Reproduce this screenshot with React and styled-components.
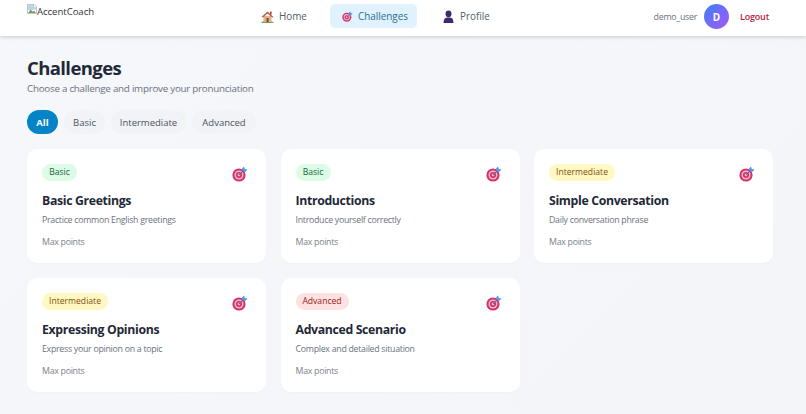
import React from 'react';
import styled, { createGlobalStyle } from 'styled-components';

const Global = createGlobalStyle`
  html, body { margin: 0; padding: 0; }
  body { font-family: "Open Sans", "Noto Sans", sans-serif; background: #f4f6f9; }
  * { box-sizing: border-box; }
`;

const Page = styled.div`
  width: 806px;
  height: 414px;
  overflow: hidden;
  background: linear-gradient(135deg, #f5f7fa 0%, #f3f5f8 100%);
`;

const Navbar = styled.header`
  height: 36px;
  background: #fff;
  box-shadow: 0 1px 4px rgba(0, 0, 0, 0.18);
  display: grid;
  grid-template-columns: 220px 1fr auto;
  padding: 0 37px 0 27px;
  position: relative;
`;

const Logo = styled.div`
  display: flex;
  align-items: flex-start;
  padding-top: 4px;
  font-size: 9.6px;
  letter-spacing: -0.05px;
  line-height: 16px;
  color: #333;
`;

const BrokenImg = styled.svg`
  width: 10px;
  height: 10px;
  flex: none;
`;

const Nav = styled.nav`
  display: flex;
  align-items: flex-start;
  padding-top: 4px;
`;

const NavLink = styled.a`
  height: 24px;
  flex: none;
  display: flex;
  align-items: center;
  gap: 5px;
  padding: 0 12px;
  margin-left: ${p => p.$ml || 0}px;
  width: ${p => p.$w}px;
  border-radius: 5px;
  font-size: 9.9px;
  font-weight: 500;
  color: ${p => (p.$active ? '#2b6f93' : '#555c66')};
  background: ${p => (p.$active ? '#e0f2fe' : 'transparent')};
  svg { flex: none; }
`;

const UserArea = styled.div`
  display: flex;
  align-items: flex-start;
  padding-top: 4px;
  height: 36px;
`;

const UserName = styled.span`
  font-size: 8.8px;
  letter-spacing: -0.25px;
  line-height: 26px;
  color: #6b7280;
  margin-right: 7px;
`;

const Avatar = styled.div`
  width: 25px;
  height: 25px;
  border-radius: 50%;
  background: linear-gradient(135deg, #3b82f6, #a855f7);
  color: #fff;
  display: flex;
  align-items: center;
  justify-content: center;
  font-size: 10px;
  font-weight: 700;
  margin-right: 11px;
`;

const Logout = styled.span`
  font-size: 9px;
  letter-spacing: -0.2px;
  font-weight: 600;
  line-height: 26px;
  color: #b91c3c;
`;

const Main = styled.main`
  padding: 19px 33px 0 27px;
`;

const Title = styled.h1`
  margin: 0;
  font-size: 18.5px;
  letter-spacing: -0.6px;
  line-height: 26px;
  font-weight: 700;
  color: #1f2937;
`;

const Subtitle = styled.p`
  margin: 0;
  font-size: 9.8px;
  letter-spacing: -0.25px;
  line-height: 15px;
  color: #6b7280;
`;

const Filters = styled.div`
  display: flex;
  gap: 6px;
  margin-top: 14px;
`;

const FilterBtn = styled.button`
  height: 24px;
  width: ${p => p.$w}px;
  padding: 0;
  border: 0;
  border-radius: 12px;
  font-family: inherit;
  font-size: 9.5px;
  background: ${p => (p.$active ? '#0284c7' : '#f1f3f6')};
  color: ${p => (p.$active ? '#fff' : '#4b5563')};
  font-weight: ${p => (p.$active ? 700 : 500)};
`;

const Grid = styled.section`
  display: grid;
  grid-template-columns: repeat(3, 239px);
  column-gap: 14.5px;
  row-gap: 15px;
  margin-top: 15px;
`;

const Card = styled.article`
  height: 114px;
  background: #fff;
  border-radius: 10px;
  padding: 15px 15px 0;
  box-shadow: 0 1px 3px rgba(0, 0, 0, 0.02);
`;

const CardHead = styled.div`
  display: flex;
  justify-content: space-between;
  align-items: flex-start;
`;

const colors = {
  Basic: ['#dcfce7', '#166534', 35],
  Intermediate: ['#fef9c3', '#854d0e', 66],
  Advanced: ['#fee2e2', '#991b1b', 53],
};

const Badge = styled.span`
  height: 17px;
  line-height: 17px;
  width: ${p => colors[p.$level][2]}px;
  text-align: center;
  border-radius: 9px;
  font-size: 8.6px;
  font-weight: 500;
  background: ${p => colors[p.$level][0]};
  color: ${p => colors[p.$level][1]};
`;

const IconSlot = styled.div`
  margin: 2px 3px 0 0;
  display: flex;
`;

const CardTitle = styled.h3`
  margin: 9px 0 0;
  font-size: 12.3px;
  letter-spacing: -0.35px;
  line-height: 19px;
  font-weight: 700;
  color: #1f2937;
`;

const CardDesc = styled.p`
  margin: 4px 0 0;
  font-size: 8.8px;
  letter-spacing: -0.28px;
  line-height: 13px;
  color: #6b7280;
`;

const CardPoints = styled.p`
  margin: 9px 0 0;
  font-size: 8.8px;
  letter-spacing: -0.28px;
  line-height: 13px;
  color: #7b828c;
`;

const Target = ({ size = 16 }) => (
  <svg width={size} height={size} viewBox="0 0 16 16">
    <circle cx="7" cy="9" r="6.6" fill="#d6336c" />
    <circle cx="7" cy="9" r="4.5" fill="#f4b6cc" />
    <circle cx="7" cy="9" r="3" fill="#c9305f" />
    <circle cx="7" cy="9" r="1.4" fill="#f4b6cc" />
    <path d="M7 9 L12 4" stroke="#3f6fa8" strokeWidth="1" />
    <path d="M10 2.5 L12 0.5 L12.8 3 L15.5 3.5 L13.5 5.8 L10.8 5 Z" fill="#4a9be8" />
  </svg>
);

const House = () => (
  <svg width="13" height="13" viewBox="0 0 13 13">
    <path d="M0.5 12 Q6 9.5 12.5 12 L12.5 13 L0.5 13 Z" fill="#6fa35a" />
    <rect x="2.5" y="6" width="8" height="6" fill="#d9b48f" />
    <path d="M0.5 7 L6.5 1.5 L12.5 7 L11 7.6 L6.5 3.6 L2 7.6 Z" fill="#c2553d" />
    <rect x="9" y="1.5" width="1.6" height="3" fill="#a5482f" />
    <rect x="5.5" y="8" width="2.2" height="4" fill="#8a4b32" />
  </svg>
);

const Person = () => (
  <svg width="13" height="13" viewBox="0 0 13 13">
    <ellipse cx="6.5" cy="3.8" rx="3" ry="3.4" fill="#3f2a6d" />
    <path d="M1.5 13 Q1.5 8 5 7.6 L8 7.6 Q11.5 8 11.5 13 Z" fill="#3f2a6d" />
  </svg>
);

const Broken = () => (
  <BrokenImg viewBox="0 0 11 11">
    <path d="M0.5 0.5 H8 L10.5 3 V10.5 H0.5 Z" fill="#fff" stroke="#a8a8a8" strokeWidth="0.8" />
    <path d="M1.2 1.2 H7.8 V3.2 H9.8 V6 L1.2 7 Z" fill="#bcd3f0" />
    <path d="M1.2 9.8 L4 6 L6.5 8.5 L8 7.5 L9.8 9.8 Z" fill="#6ea35c" />
  </BrokenImg>
);

const cards = [
  ['Basic', 'Basic Greetings', 'Practice common English greetings'],
  ['Basic', 'Introductions', 'Introduce yourself correctly'],
  ['Intermediate', 'Simple Conversation', 'Daily conversation phrase'],
  ['Intermediate', 'Expressing Opinions', 'Express your opinion on a topic'],
  ['Advanced', 'Advanced Scenario', 'Complex and detailed situation'],
];

export default function App() {
  return (
    <Page>
      <Global />
      <Navbar>
        <Logo>
          <Broken />
          <span>AccentCoach</span>
        </Logo>
        <Nav>
          <NavLink $w={70} $ml={2}><House />Home</NavLink>
          <NavLink $w={87} $ml={11} $active><Target size={11} />Challenges</NavLink>
          <NavLink $w={70} $ml={13}><Person />Profile</NavLink>
        </Nav>
        <UserArea>
          <UserName>demo_user</UserName>
          <Avatar>D</Avatar>
          <Logout>Logout</Logout>
        </UserArea>
      </Navbar>
      <Main>
        <Title>Challenges</Title>
        <Subtitle>Choose a challenge and improve your pronunciation</Subtitle>
        <Filters>
          <FilterBtn $w={31} $active>All</FilterBtn>
          <FilterBtn $w={41}>Basic</FilterBtn>
          <FilterBtn $w={75}>Intermediate</FilterBtn>
          <FilterBtn $w={64}>Advanced</FilterBtn>
        </Filters>
        <Grid>
          {cards.map(([level, title, desc]) => (
            <Card key={title}>
              <CardHead>
                <Badge $level={level}>{level}</Badge>
                <IconSlot><Target /></IconSlot>
              </CardHead>
              <CardTitle>{title}</CardTitle>
              <CardDesc>{desc}</CardDesc>
              <CardPoints>Max points</CardPoints>
            </Card>
          ))}
        </Grid>
      </Main>
    </Page>
  );
}
